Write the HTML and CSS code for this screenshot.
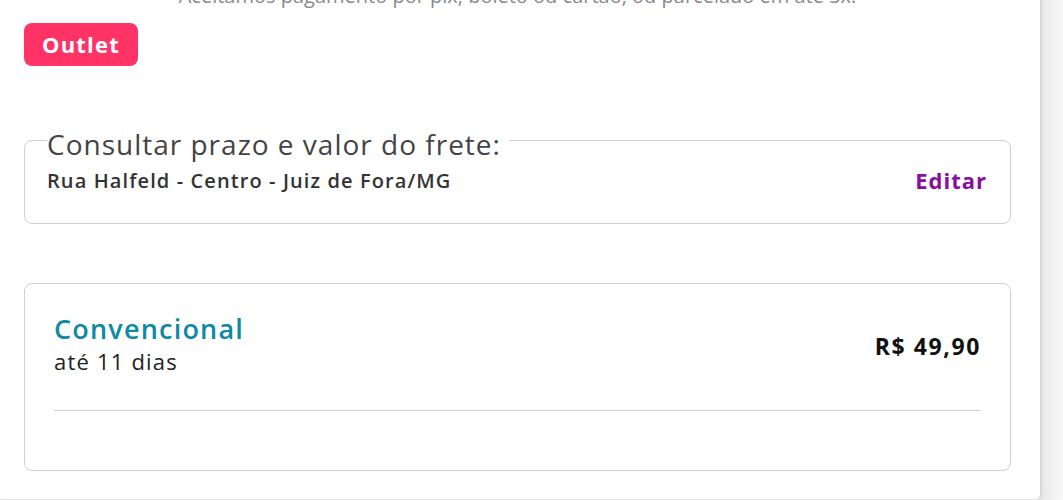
FILE: index.html
```html
<!DOCTYPE html>
<html lang="pt-BR">
<head>
  <meta charset="UTF-8" />
  <meta name="viewport" content="width=device-width, initial-scale=1.0"/>
  <title>Frete - Produto</title>
  <link rel="stylesheet" href="styles.css">
</head>
<body>

<main class="panel">
  <p class="note">Aceitamos pagamento por pix, boleto ou cartão, ou parcelado em até 3x.</p>

  <span class="badge">Outlet</span>

  <fieldset class="shipping">
    <legend>Consultar prazo e valor do frete:</legend>
    <div class="shipping-row">
      <span class="address">Rua Halfeld - Centro - Juiz de Fora/MG</span>
      <a href="#" class="edit">Editar</a>
    </div>
  </fieldset>

  <section class="options">
    <div class="option">
      <div>
        <h3 class="option-name">Convencional</h3>
        <p class="option-time">até 11 dias</p>
      </div>
      <span class="option-price">R$ 49,90</span>
    </div>
    <hr class="divider" />
  </section>
</main>

</body>
</html>
```

FILE: styles.css
```css
* { box-sizing: border-box; margin: 0; padding: 0; }

body {
  font-family: 'Open Sans', 'Noto Sans', sans-serif;
  background: linear-gradient(to right, #e9e9e9 1042px, #f8f8f8);
  color: #333;
  height: 500px;
  overflow: hidden;
}

.panel {
  display: flow-root;
  width: 1041px;
  height: 499px;
  background: #fff;
  border-right: 1px solid #d4d4d4;
  border-radius: 0 0 5px 0;
  box-shadow: 1px 0 3px rgba(0, 0, 0, 0.08);
  padding: 0 29px 0 24px;
}

.note {
  margin-top: -16px;
  text-align: center;
  font-size: 20px;
  line-height: 24px;
  color: #888;
}

.badge {
  display: inline-block;
  margin-top: 15px;
  background: #ff3366;
  color: #fff;
  font-weight: 700;
  font-size: 22px;
  letter-spacing: 1.2px;
  line-height: 43px;
  height: 43px;
  padding: 0 18px;
  border-radius: 8px;
}

.shipping {
  margin-top: 56px;
  border: 1px solid #cfcfcf;
  border-radius: 8px;
  height: 102px;
  padding: 0 23px 0 22px;
}

.shipping legend {
  font-size: 28px;
  line-height: 28px;
  letter-spacing: 1px;
  color: #444;
  padding: 8px 8px 0 0;
}

.shipping-row {
  display: flex;
  justify-content: space-between;
  align-items: center;
  margin-top: 7px;
}

.address {
  font-size: 20px;
  font-weight: 600;
  color: #333;
  letter-spacing: 1.1px;
}

.edit {
  font-size: 22px;
  font-weight: 700;
  letter-spacing: 1px;
  color: #8a0d9e;
  text-decoration: none;
}

.options {
  margin-top: 59px;
  border: 1px solid #cfcfcf;
  border-radius: 8px;
  height: 188px;
  padding: 29px 29px 0 29px;
}

.option {
  display: flex;
  justify-content: space-between;
  align-items: center;
}

.option-name {
  font-size: 27px;
  font-weight: 600;
  letter-spacing: 1.2px;
  color: #0f8aa3;
  line-height: 32px;
}

.option-time {
  font-size: 22px;
  letter-spacing: 1.2px;
  color: #222;
  line-height: 33px;
}

.option-price {
  font-size: 23px;
  font-weight: 700;
  letter-spacing: 1.6px;
  color: #111;
}

.divider {
  margin-top: 32px;
  border: none;
  border-top: 1px solid #cfcfcf;
}
```
